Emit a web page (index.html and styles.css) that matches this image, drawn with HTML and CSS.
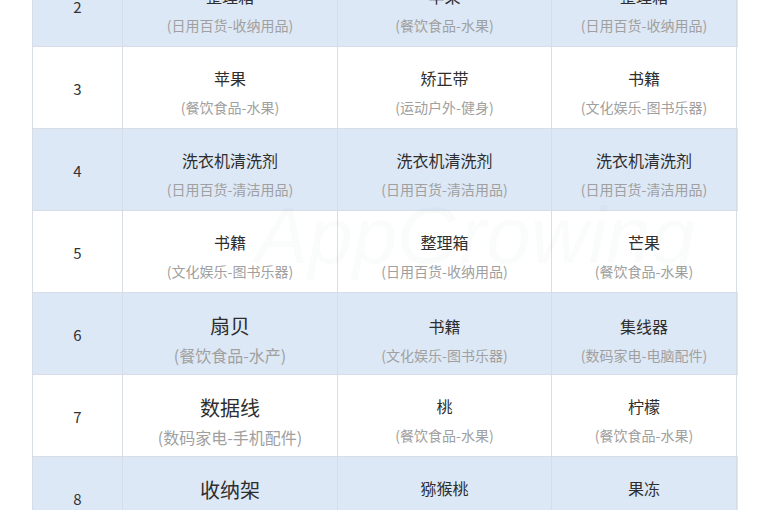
FILE: index.html
```html
<!DOCTYPE html>
<html lang="zh">
<head>
<meta charset="utf-8">
<link rel="stylesheet" href="styles.css">
</head>
<body>
<div class="page">
  <div class="table">
    <div class="row alt">
      <div class="rank">2</div>
      <div class="cell"><div class="name">整理箱</div><div class="cat">(日用百货-收纳用品)</div></div>
      <div class="cell"><div class="name">苹果</div><div class="cat">(餐饮食品-水果)</div></div>
      <div class="cell"><div class="name">整理箱</div><div class="cat">(日用百货-收纳用品)</div></div>
    </div>
    <div class="row">
      <div class="rank">3</div>
      <div class="cell"><div class="name">苹果</div><div class="cat">(餐饮食品-水果)</div></div>
      <div class="cell"><div class="name">矫正带</div><div class="cat">(运动户外-健身)</div></div>
      <div class="cell"><div class="name">书籍</div><div class="cat">(文化娱乐-图书乐器)</div></div>
    </div>
    <div class="row alt">
      <div class="rank">4</div>
      <div class="cell"><div class="name">洗衣机清洗剂</div><div class="cat">(日用百货-清洁用品)</div></div>
      <div class="cell"><div class="name">洗衣机清洗剂</div><div class="cat">(日用百货-清洁用品)</div></div>
      <div class="cell"><div class="name">洗衣机清洗剂</div><div class="cat">(日用百货-清洁用品)</div></div>
    </div>
    <div class="row">
      <div class="rank">5</div>
      <div class="cell"><div class="name">书籍</div><div class="cat">(文化娱乐-图书乐器)</div></div>
      <div class="cell"><div class="name">整理箱</div><div class="cat">(日用百货-收纳用品)</div></div>
      <div class="cell"><div class="name">芒果</div><div class="cat">(餐饮食品-水果)</div></div>
    </div>
    <div class="row alt">
      <div class="rank">6</div>
      <div class="cell big"><div class="name">扇贝</div><div class="cat">(餐饮食品-水产)</div></div>
      <div class="cell shift"><div class="name">书籍</div><div class="cat">(文化娱乐-图书乐器)</div></div>
      <div class="cell shift"><div class="name">集线器</div><div class="cat">(数码家电-电脑配件)</div></div>
    </div>
    <div class="row">
      <div class="rank">7</div>
      <div class="cell big"><div class="name">数据线</div><div class="cat">(数码家电-手机配件)</div></div>
      <div class="cell"><div class="name">桃</div><div class="cat">(餐饮食品-水果)</div></div>
      <div class="cell"><div class="name">柠檬</div><div class="cat">(餐饮食品-水果)</div></div>
    </div>
    <div class="row alt">
      <div class="rank">8</div>
      <div class="cell big"><div class="name">收纳架</div><div class="cat">(日用百货-收纳用品)</div></div>
      <div class="cell"><div class="name">猕猴桃</div><div class="cat">(餐饮食品-水果)</div></div>
      <div class="cell"><div class="name">果冻</div><div class="cat">(餐饮食品-果冻)</div></div>
    </div>
  </div>
  <div class="watermark">AppGrowing</div>
</div>
</body>
</html>
```

FILE: styles.css
```css
html, body {
  margin: 0;
  padding: 0;
  background: #ffffff;
}

body {
  width: 768px;
  height: 510px;
  overflow: hidden;
  font-family: "Noto Sans CJK SC", "Noto Sans", sans-serif;
}

.page {
  position: relative;
  width: 768px;
  height: 510px;
  overflow: hidden;
}

.table {
  margin: -35px 0 0 32px;
  width: 705px;
  border-left: 1px solid #d6dde6;
}

.row {
  display: grid;
  grid-template-columns: 90px 215px 214px 185px;
  height: 82px;
  box-sizing: border-box;
  border-bottom: 1px solid #d6dde6;
  background: #ffffff;
}

.row.alt {
  background: #dde8f6;
}

.rank {
  border-right: 1px solid #d6dde6;
  display: flex;
  align-items: center;
  justify-content: center;
  font-size: 15px;
  color: #333333;
  padding-top: 2px;
}

.cell {
  border-right: 1px solid #d6dde6;
  text-align: center;
  padding-top: 19px;
  box-sizing: border-box;
}

.name {
  font-size: 16px;
  line-height: 24px;
  color: #2e2e2e;
}

.cat {
  margin-top: 6px;
  font-size: 14px;
  line-height: 22px;
  color: #a0a0a0;
}

.cell.big .name {
  font-size: 20px;
  line-height: 26px;
}

.cell.big .cat {
  font-size: 16px;
  line-height: 24px;
  margin-top: 4px;
}

.cell.big {
  padding-top: 20px;
}

.cell.shift {
  padding-top: 21px;
}

.watermark {
  position: absolute;
  left: 255px;
  top: 190px;
  font-family: "Liberation Sans", sans-serif;
  font-size: 80px;
  font-style: italic;
  color: rgba(120, 130, 150, 0.035);
  pointer-events: none;
  white-space: nowrap;
}
```
